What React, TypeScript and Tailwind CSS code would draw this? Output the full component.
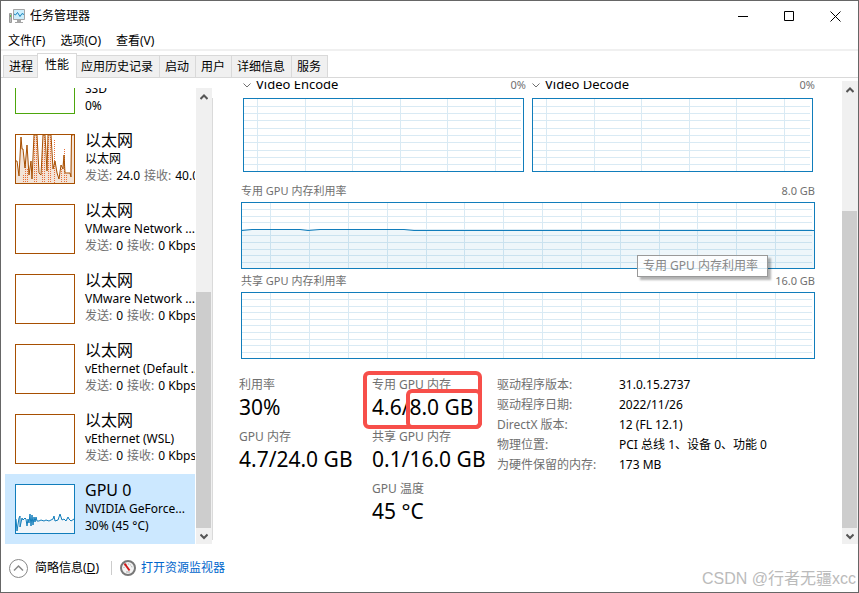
import { useState } from "react";
import clsx from "clsx";

const TABS = ["进程", "性能", "应用历史记录", "启动", "用户", "详细信息", "服务"];
const MENUS = ["文件(F)", "选项(O)", "查看(V)"];

interface Device {
  id: string;
  title: string;
  subtitle: string;
  kind: "disk" | "network" | "gpu";
  usage?: string;
  send?: string;
  receive?: string;
  busy?: boolean;
}

const DEVICES: Device[] = [
  { id: "disk", title: "磁盘 0 (C:)", subtitle: "SSD", kind: "disk", usage: "0%" },
  { id: "eth0", title: "以太网", subtitle: "以太网", kind: "network", send: "24.0", receive: "40.0 Kbps", busy: true },
  { id: "eth1", title: "以太网", subtitle: "VMware Network ...", kind: "network", send: "0", receive: "0 Kbps" },
  { id: "eth2", title: "以太网", subtitle: "VMware Network ...", kind: "network", send: "0", receive: "0 Kbps" },
  { id: "eth3", title: "以太网", subtitle: "vEthernet (Default ...", kind: "network", send: "0", receive: "0 Kbps" },
  { id: "eth4", title: "以太网", subtitle: "vEthernet (WSL)", kind: "network", send: "0", receive: "0 Kbps" },
  { id: "gpu0", title: "GPU 0", subtitle: "NVIDIA GeForce...", kind: "gpu", usage: "30% (45 °C)" },
];

const DETAILS = [
  ["驱动程序版本:", "31.0.15.2737"],
  ["驱动程序日期:", "2022/11/26"],
  ["DirectX 版本:", "12 (FL 12.1)"],
  ["物理位置:", "PCI 总线 1、设备 0、功能 0"],
  ["为硬件保留的内存:", "173 MB"],
];

const NET_LINE =
  "0,26 1,26 3,41 5,2 6,14 7,14 9,33 11,10 13,40 15,26 16,44 18,0 21,0 23,38 25,40 27,0 29,0 31,36 32,0 35,0 37,34 39,26 41,38 43,44 45,30 47,34 48,20 49,38 54,38 55,42 55.500,0 57.500,0";
const NET_FILL = "0,48 0,26 3,41 5,2 9,33 11,10 13,40 15,26 16,44 18,0 21,0 23,38 25,40 27,0 29,0 31,36 32,0 35,0 37,34 39,26 43,44 48,20 49,38 54,38 55,0 58,0 58,48";
const GPU_LINE =
  "0,34 1,46 3,33 4,31 4,42 6,33 7,35 9,33 10,34 11,41 12,34 13,38 14,29 15,41 16,30 17,40 18,32 19,37 20,32 21,36 23,36 25,35 28,36 30,35 33,36 35,35 37,34 38,31 39,36 42,35 44,29 46,35 48,34 50,36 52,32 53,34 55,36 58,34";

const SMALL_GRID = {
  width: 279,
  height: 72,
  xs: [13, 61, 108, 156, 203, 251],
  ys: [7, 14, 21, 29, 36, 43, 51, 58, 65],
};
const WIDE_GRID = {
  width: 572,
  height: 65,
  xs: [28, 67, 106, 145, 184, 222, 261, 300, 339, 378, 417, 455, 494, 533],
  ys: [6, 13, 19, 26, 32, 39, 46, 52, 59],
};

function GridChart({ grid, line, label }: { grid: typeof SMALL_GRID; line?: string; label: string }) {
  const { width, height, xs, ys } = grid;
  return (
    <svg
      role="img"
      aria-label={label}
      className="block h-full w-full"
      viewBox={`0 0 ${width} ${height}`}
      preserveAspectRatio="none"
    >
      <g stroke="#d9eaf4" shapeRendering="crispEdges">
        {xs.map(x => <line key={x} x1={x + 0.5} x2={x + 0.5} y1={0} y2={height} />)}
        {ys.map(y => <line key={y} x1={0} x2={width - 2} y1={y + 0.5} y2={y + 0.5} />)}
      </g>
      {line && (
        <>
          <polygon points={`0,${height} ${line} ${width},${height}`} fill="#117dbb" fillOpacity={0.07} />
          <polyline points={line} fill="none" stroke="#117dbb" />
        </>
      )}
    </svg>
  );
}

function Chevron({ up, className }: { up?: boolean; className?: string }) {
  return (
    <svg viewBox="0 0 8 8" className={clsx("h-2 w-2", className)} fill="none" stroke="currentColor">
      <path d={up ? "M.5 6 4 2.5 7.5 6" : "M.5 2.5 4 6 7.5 2.5"} />
    </svg>
  );
}

function ScrollBar({ thumb }: { thumb: string }) {
  return (
    <div className="flex w-4 shrink-0 flex-col bg-[#f0f0f0] text-[#555]">
      <button aria-label="向上滚动" className="flex h-[18px] shrink-0 items-center justify-center">
        <Chevron up className="stroke-2" />
      </button>
      <div className="flex flex-1 flex-col justify-end">
        <div className={clsx("w-[15px] bg-[#cdcdcd]", thumb)} />
      </div>
      <button aria-label="向下滚动" className="flex h-4 shrink-0 items-center justify-center">
        <Chevron className="stroke-2" />
      </button>
    </div>
  );
}

function Thumbnail({ device }: { device: Device }) {
  return (
    <div
      className={clsx(
        "h-[50px] w-[60px] shrink-0 border bg-white",
        device.kind === "disk" && "border-[#4da60c]",
        device.kind === "network" && "border-[#a74f01]",
        device.kind === "gpu" && "border-[#117dbb]"
      )}
    >
      {device.busy && (
        <svg viewBox="0 0 58 48" className="block h-full w-full">
          <polygon points={NET_FILL} fill="#f3e4d8" />
          <path
            d="M7.500 40V48M9.500 26V48M11.500 34V48M18.500 2V48M20.500 2V48M26.500 16V48M28.500 2V48M32.500 2V48M34.500 2V48M38.500 5V48M45.500 34V48M48.500 14V48M50.500 40V48"
            fill="none"
            stroke="#e8703a"
            strokeDasharray="1 1"
          />
          <polyline points={NET_LINE} fill="none" stroke="#a74f01" />
        </svg>
      )}
      {device.kind === "gpu" && (
        <svg viewBox="0 0 58 48" className="block h-full w-full">
          <polygon points={`0,48 ${GPU_LINE} 58,48`} fill="#f1f6fa" />
          <polyline points={GPU_LINE} fill="none" stroke="#117dbb" />
        </svg>
      )}
    </div>
  );
}

function DeviceItem({ device, selected, onSelect }: { device: Device; selected: boolean; onSelect: () => void }) {
  return (
    <button
      onClick={onSelect}
      className={clsx("flex h-[70px] w-full shrink-0 items-start gap-2.5 overflow-hidden pl-2.5 text-left", selected && "bg-[#cce8ff]")}
    >
      <div className="pt-2.5">
        <Thumbnail device={device} />
      </div>
      <div className="pt-1.5 leading-[17px] whitespace-nowrap">
        <div className="text-base leading-5">{device.title}</div>
        <div>{device.subtitle}</div>
        {device.kind === "network" ? (
          <div className="flex gap-1">
            <span className="text-[#707070]">发送:</span>
            <span>{device.send}</span>
            <span className="text-[#707070]">接收:</span>
            <span>{device.receive}</span>
          </div>
        ) : (
          <div>{device.usage}</div>
        )}
      </div>
    </button>
  );
}

function EngineChart({ name, value }: { name: string; value: string }) {
  return (
    <div className="min-w-0 flex-1">
      <div className="flex h-4 items-center pl-0.5">
        <Chevron className="text-[#707070]" />
        <span className="flex-1 pl-[5px] text-[13px]">{name}</span>
        <span className="text-[11px] text-[#707070]">{value}</span>
      </div>
      <div className="mx-0.5 mt-[5px] h-[74px] border border-[#117dbb]">
        <GridChart grid={SMALL_GRID} label={name} />
      </div>
    </div>
  );
}

function MemoryChart({ name, max, line }: { name: string; max: string; line?: string }) {
  return (
    <div>
      <div className="flex justify-between text-[11px] leading-[23px] text-[#707070]">
        <span>{name}</span>
        <span>{max}</span>
      </div>
      <div className="h-[67px] border border-[#117dbb]">
        <GridChart grid={WIDE_GRID} line={line} label={name} />
      </div>
    </div>
  );
}

function Stat({ label, value }: { label: string; value: string }) {
  return (
    <div className="whitespace-nowrap">
      <div className="leading-5 text-[#707070]">{label}</div>
      <div className="text-[21px] leading-6">{value}</div>
    </div>
  );
}

function AppIcon() {
  return (
    <svg viewBox="0 0 16 16" className="h-4 w-4">
      <path d="M.5 5.5h2v9h-2z" fill="#bbb" stroke="#999" />
      <path d="M1 7h1v2H1z" fill="#57c84d" />
      <path d="M4.500 1.500h11v10h-11z" fill="#cdeefb" stroke="#a5a5a5" />
      <path d="M8 12h4v2H8zM6 14h8v1H6z" fill="#a5a5a5" />
      <path d="m5 6 1.500 1 2-2.500 2.500 4 2-3 2 1" fill="none" stroke="#1583bd" />
    </svg>
  );
}

function App() {
  const [activeTab, setActiveTab] = useState("性能");
  const [selectedId, setSelectedId] = useState("gpu0");

  return (
    <div className="relative flex h-screen w-full flex-col overflow-hidden border border-[#666] bg-white font-['Noto_Sans','Noto_Sans_CJK_SC',sans-serif] text-xs text-black">
      <header className="flex h-[30px] shrink-0 items-center pl-2">
        <AppIcon />
        <h1 className="flex-1 pl-[5px]">任务管理器</h1>
        <button aria-label="最小化" className="flex h-full w-[46px] items-center justify-center">
          <svg viewBox="0 0 11 11" className="h-[11px] w-[11px]"><path d="M0 5.5h10" stroke="#000" /></svg>
        </button>
        <button aria-label="最大化" className="flex h-full w-[46px] items-center justify-center">
          <svg viewBox="0 0 11 11" className="h-[11px] w-[11px]"><path d="M.5.5h9v9h-9z" fill="none" stroke="#000" /></svg>
        </button>
        <button aria-label="关闭" className="flex h-full w-[46px] items-center justify-center">
          <svg viewBox="0 0 11 11" className="h-[11px] w-[11px]"><path d="m.5.5 10 10m0-10-10 10" stroke="#000" /></svg>
        </button>
      </header>

      <nav className="flex h-5 shrink-0 items-end gap-[15px] border-b-2 border-[#f0f0f0] pl-[7px]">
        {MENUS.map(m => <button key={m}>{m}</button>)}
      </nav>

      <div role="tablist" className="flex h-[27px] shrink-0 items-end border-b border-[#d9d9d9] pl-0.5">
        {TABS.map(tab => (
          <button
            key={tab}
            role="tab"
            aria-selected={activeTab === tab}
            onClick={() => setActiveTab(tab)}
            className={clsx(
              "border-t border-l border-[#d9d9d9] whitespace-nowrap last:border-r",
              activeTab === tab
                ? "z-10 -mx-0.5 -mb-px h-[25px] border-r bg-white px-[7px] pb-0.5"
                : "h-[22px] bg-[#f0f0f0] pr-1.5 pl-[5px]"
            )}
          >
            {tab}
          </button>
        ))}
      </div>

      <div className="flex min-h-0 flex-1">
        <aside className="flex w-[211px] shrink-0 pt-2.5 pl-1">
          <div className="flex min-w-0 flex-1 flex-col justify-end overflow-hidden pr-px">
            {DEVICES.map(d => (
              <DeviceItem key={d.id} device={d} selected={d.id === selectedId} onSelect={() => setSelectedId(d.id)} />
            ))}
          </div>
          <ScrollBar thumb="h-[56%]" />
        </aside>
        <div className="mt-5 mb-1 w-px bg-[#dadada]" />

        <main className="flex min-w-0 flex-1 pt-[3px]">
          <div className="min-w-0 flex-1 overflow-hidden pr-[27px] pl-[26px]">
            <section className="relative -mt-1 pl-0.5">
              <div className="flex gap-1">
                <EngineChart name="Video Encode" value="0%" />
                <EngineChart name="Video Decode" value="0%" />
              </div>
              <div className="mt-[7px]">
                <MemoryChart
                  name="专用 GPU 内存利用率"
                  max="8.0 GB"
                  line="0,27.5 10,26.5 58,26.5 66,27.5 78,26.5 162,26.5 172,27.5 572,27.5"
                />
                <MemoryChart name="共享 GPU 内存利用率" max="16.0 GB" />
              </div>
              <div
                role="tooltip"
                className="absolute right-[47px] bottom-[82px] border border-[#999] bg-white/80 pr-[9px] pl-[5px] leading-5 text-[#888] shadow-[3px_3px_2px_rgba(0,0,0,0.3)]"
              >
                专用 GPU 内存利用率
              </div>
            </section>

            <section className="mt-4 flex">
              <div className="flex w-[133px] shrink-0 flex-col gap-2">
                <Stat label="利用率" value="30%" />
                <Stat label="GPU 内存" value="4.7/24.0 GB" />
              </div>
              <div className="relative flex w-[125px] shrink-0 flex-col gap-2">
                <Stat label="专用 GPU 内存" value="4.6/8.0 GB" />
                <Stat label="共享 GPU 内存" value="0.1/16.0 GB" />
                <Stat label="GPU 温度" value="45 °C" />
                <div className="absolute -top-1 -left-[9px] h-[58px] w-[119px] rounded-md border-4 border-[#f74f4a]" />
                <div className="absolute top-3.5 left-[34px] h-10 w-[76px] rounded-md border-4 border-[#f74f4a]" />
              </div>
              <table className="self-start text-left leading-5 whitespace-nowrap">
                <tbody>
                  {DETAILS.map(([label, value]) => (
                    <tr key={label}>
                      <th scope="row" className="w-[122px] p-0 font-normal text-[#707070]">{label}</th>
                      <td className="p-0">{value}</td>
                    </tr>
                  ))}
                </tbody>
              </table>
            </section>
          </div>
          <ScrollBar thumb="h-[74%]" />
        </main>
      </div>

      <footer className="flex h-12 shrink-0 items-center pl-2">
        <button className="flex items-center gap-[7px]">
          <svg viewBox="0 0 19 19" className="h-[19px] w-[19px]" fill="none">
            <circle cx="9.5" cy="9.5" r="9" stroke="#888" />
            <path d="m5 11.5 4.5-4.5 4.5 4.5" stroke="#888" strokeWidth="1.5" />
          </svg>
          <span>简略信息(<u>D</u>)</span>
        </button>
        <div className="mr-2 ml-3 h-3.5 w-px bg-[#ccc]" />
        <a href="#resmon" className="flex items-center gap-[5px] text-[#0066cc]">
          <svg viewBox="0 0 16 16" className="h-4 w-4">
            <circle cx="8" cy="8" r="7" fill="#f4f4f4" stroke="#777" strokeWidth="2" />
            <path d="M4 8a4 4 0 0 1 8 0" fill="none" stroke="#999" strokeDasharray="1 1" />
            <path d="m4.500 3.500 5 7" stroke="#d01818" strokeWidth="2" />
            <path d="M6 12h4" stroke="#aaa" />
          </svg>
          打开资源监视器
        </a>
      </footer>

      <div className="pointer-events-none absolute right-0.5 bottom-[3px] font-['Liberation_Sans','Noto_Sans_CJK_SC',sans-serif] text-base leading-5 text-[#bbb]">
        CSDN @行者无疆xcc
      </div>
    </div>
  );
}

export default App;
